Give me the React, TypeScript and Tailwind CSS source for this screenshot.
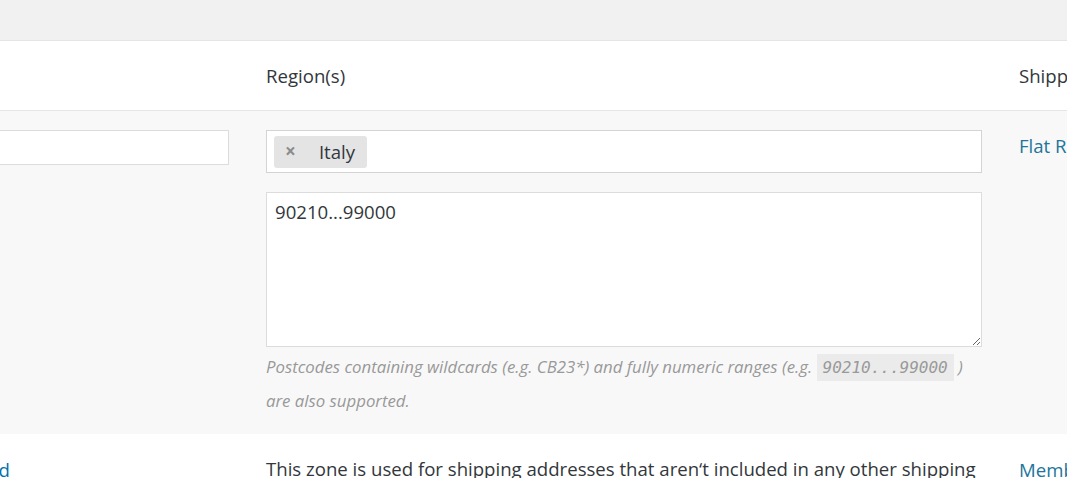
export default function App() {
  return (
    <div
      className="h-[478px] w-[1067px] overflow-hidden bg-white text-[#32373c]"
      style={{ fontFamily: '"Open Sans", "Liberation Sans", sans-serif' }}
    >
      {/* Top bar */}
      <div className="h-[41px] border-b border-[#e5e5e5] bg-[#f1f1f1]" />

      <div className="-ml-[150px] w-[1300px]">
        {/* Header row */}
        <div className="flex h-[70px] items-center border-b border-[#e5e5e5] text-[18.6px]">
          <div className="w-[398px] shrink-0" />
          <div className="w-[752px] shrink-0 px-[18px]">Region(s)</div>
          <div className="whitespace-nowrap pl-[19px]">Shipping method(s)</div>
        </div>

        {/* Editing row */}
        <div className="flex h-[323px] bg-[#f8f8f8] pt-[19px]">
          <div className="w-[398px] shrink-0 pl-[10px] pr-[19px]">
            <input
              className="h-[35px] w-full border border-[#dcdcdc] bg-white px-2 text-[16px] outline-none"
              defaultValue=""
            />
          </div>
          <div className="w-[752px] shrink-0 px-[18px]">
            <div className="flex h-[43px] items-center border border-[#d4d4d4] bg-white px-[7px]">
              <span className="flex h-[32px] items-center rounded-[3px] bg-[#e4e4e4] pr-[12px] pl-[11px] text-[18.6px]">
                <span className="mr-[23px] text-[19px] leading-none font-bold text-[#8c8c8c]">×</span>
                Italy
              </span>
            </div>
            <textarea
              className="mt-[19px] block h-[155px] w-full border border-[#dcdcdc] bg-white px-[8px] py-[5px] text-[18.6px] text-[#32373c] outline-none"
              defaultValue="90210...99000"
            />
            <p className="mt-[3px] text-[16.8px] leading-[33px] text-[#999] italic">
              Postcodes containing wildcards (e.g. CB23*) and fully numeric ranges (e.g.{' '}
              <code
                className="bg-[#ebebeb] px-[6px] py-[4px] text-[16px] text-[#999]"
                style={{ fontFamily: '"DejaVu Sans Mono", "Liberation Mono", monospace' }}
              >
                90210...99000
              </code>{' '}
              ) are also supported.
            </p>
          </div>
          <div className="whitespace-nowrap pt-[2px] pl-[19px] text-[18.6px] text-[#21759b]">Flat Rate</div>
        </div>

        {/* Next row */}
        <div className="flex pt-[22px] text-[18.6px]">
          <div className="w-[398px] shrink-0 pl-[10px]">
            <span className="text-[#0073aa]">Rest of the World</span>
          </div>
          <div className="w-[752px] shrink-0 px-[18px] leading-[26px]">
            This zone is used for shipping addresses that aren‘t included in any other shipping zone.
          </div>
          <div className="whitespace-nowrap pl-[19px] text-[#21759b]">Member</div>
        </div>
      </div>
    </div>
  )
}
